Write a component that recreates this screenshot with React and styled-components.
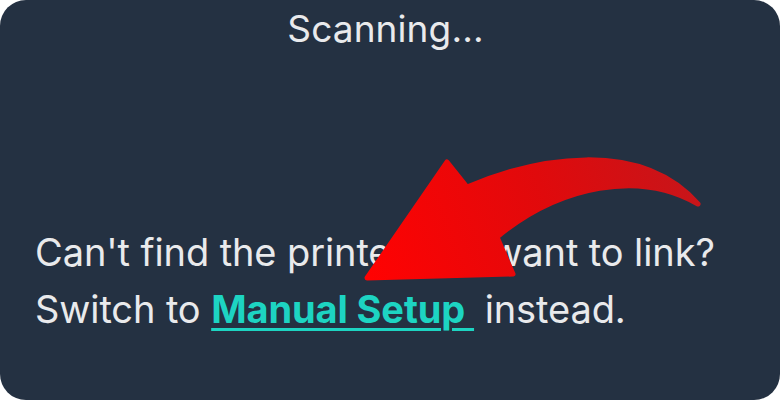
import React from 'react'
import styled, { createGlobalStyle } from 'styled-components'

const GlobalStyle = createGlobalStyle`
  html, body {
    margin: 0;
    padding: 0;
    background: #ffffff;
  }
  body {
    font-family: Inter, "Noto Sans", sans-serif;
  }
`

export default function App() {
  return (
    <>
      <GlobalStyle />
      <Card>
        <Title>Scanning...</Title>

        <Message>
          <Line>Can't find the printer you want to link?</Line>
          <Line>
            Switch to <ManualLink href="#">Manual Setup </ManualLink> instead.
          </Line>
        </Message>

        <Arrow viewBox="0 0 780 400" aria-hidden="true">
          <defs>
            <linearGradient id="arrowFill" x1="370" y1="280" x2="700" y2="160" gradientUnits="userSpaceOnUse">
              <stop offset="0" stopColor="#ff0202" />
              <stop offset="0.55" stopColor="#e00a0c" />
              <stop offset="1" stopColor="#c5161b" />
            </linearGradient>
          </defs>
          <path
            d="M447 162 L467 187 C535 158 640 138 698 204 C640 170 560 185 497 237 L513 274 L367 278 Z"
            fill="url(#arrowFill)"
            stroke="url(#arrowFill)"
            strokeWidth="5"
            strokeLinejoin="round"
          />
        </Arrow>
      </Card>
    </>
  )
}

const Card = styled.div`
  position: relative;
  width: 780px;
  height: 400px;
  box-sizing: border-box;
  background: #243142;
  border-radius: 26px;
  display: flex;
  flex-direction: column;
  overflow: hidden;
  color: #e9eaec;
`

const Title = styled.div`
  text-align: center;
  padding-right: 9px;
  font-size: 37px;
  line-height: 58px;
  letter-spacing: 0.1px;
`

const Message = styled.div`
  margin-top: auto;
  padding: 0 0 62px 35px;
  font-size: 38px;
  line-height: 57px;
  letter-spacing: -0.1px;
`

const Line = styled.div`
  white-space: nowrap;
`

const ManualLink = styled.a`
  color: #1dd4c2;
  font-weight: 700;
  text-decoration: underline;
  text-decoration-thickness: 3px;
  text-underline-offset: 5px;
  white-space: pre;
`

const Arrow = styled.svg`
  position: absolute;
  left: 0;
  top: 0;
  width: 780px;
  height: 400px;
  pointer-events: none;
`
